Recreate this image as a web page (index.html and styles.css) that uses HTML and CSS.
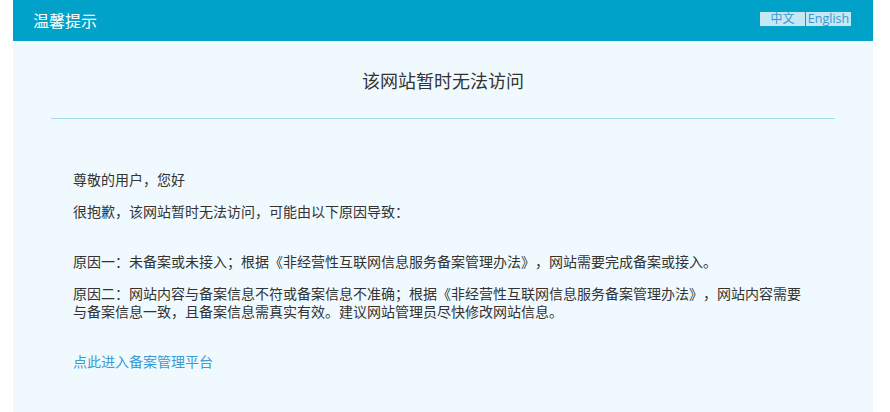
FILE: index.html
```html
<!DOCTYPE html>
<html lang="zh-CN">
<head>
<meta charset="utf-8">
<title>温馨提示</title>
<link rel="stylesheet" href="styles.css">
</head>
<body>
<div class="page">
  <header class="topbar">
    <div class="brand">温馨提示</div>
    <div class="lang">
      <a class="lang-item" href="#">中文</a>
      <a class="lang-item" href="#">English</a>
    </div>
  </header>
  <main class="content">
    <h1 class="title">该网站暂时无法访问</h1>
    <div class="rule"></div>
    <div class="body">
      <p class="para">尊敬的用户，您好</p>
      <p class="para">很抱歉，该网站暂时无法访问，可能由以下原因导致：</p>
      <p class="para gap">原因一：未备案或未接入；根据《非经营性互联网信息服务备案管理办法》，网站需要完成备案或接入。</p>
      <p class="para">原因二：网站内容与备案信息不符或备案信息不准确；根据《非经营性互联网信息服务备案管理办法》，网站内容需要与备案信息一致，且备案信息需真实有效。建议网站管理员尽快修改网站信息。</p>
      <p class="para gap"><a class="link" href="#">点此进入备案管理平台</a></p>
    </div>
  </main>
</div>
</body>
</html>
```

FILE: styles.css
```css
html, body {
  margin: 0;
  padding: 0;
  background: #ffffff;
}
body {
  font-family: "Noto Sans CJK SC", "Noto Sans", sans-serif;
  color: #333333;
  text-spacing-trim: space-all;
  font-feature-settings: "halt" 0, "chws" 0;
}
.page {
  width: 860px;
  margin-left: 13px;
}
.topbar {
  height: 41px;
  background: #00a2ca;
  display: flex;
  align-items: center;
  justify-content: space-between;
  padding: 0 22px 0 20px;
}
.brand {
  color: #ffffff;
  font-size: 16px;
  line-height: 41px;
}
.lang {
  display: flex;
  gap: 1px;
  margin-top: -3px;
}
.lang-item {
  display: block;
  width: 45px;
  height: 14px;
  line-height: 14px;
  font-size: 12.5px;
  text-align: center;
  background: #c5e8f5;
  color: #3a98d0;
  text-decoration: none;
  font-family: "Open Sans", "Noto Sans CJK SC", sans-serif;
}
.lang-item:first-child {
  font-size: 12px;
}
.content {
  box-sizing: border-box;
  background: #eff9fe;
  min-height: 371px;
  padding: 27px 38px 20px 38px;
}
.title {
  margin: 0;
  font-size: 18px;
  font-weight: normal;
  line-height: 24px;
  text-align: center;
  color: #333333;
}
.rule {
  height: 1px;
  background: #a3dcef;
  margin-top: 26px;
}
.body {
  padding: 51px 22px 0 22px;
}
.para {
  margin: 0 0 14px 0;
  font-size: 14px;
  line-height: 18px;
}
.para.gap {
  margin-top: 32px;
}
.link {
  color: #3a9bd5;
  text-decoration: none;
}
```
